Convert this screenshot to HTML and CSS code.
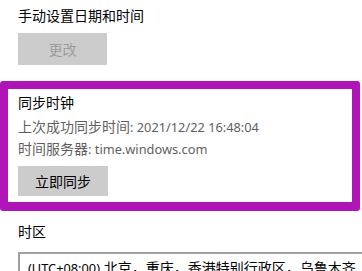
FILE: index.html
```html
<!DOCTYPE html>
<html lang="zh-CN">
<head>
<meta charset="utf-8">
<link rel="stylesheet" href="styles.css">
</head>
<body>
<div class="section">
  <div class="label">手动设置日期和时间</div>
  <button class="btn btn-disabled">更改</button>
</div>
<div class="sync-box">
  <div class="label">同步时钟</div>
  <div class="info first">上次成功同步时间<span class="latin">: 2021/12/22 16:48:04</span></div>
  <div class="info">时间服务器<span class="latin">: time.windows.com</span></div>
  <button class="btn btn-sync">立即同步</button>
</div>
<div class="section">
  <div class="label tz-label">时区</div>
  <div class="select"><span class="latin">(UTC+08:00)</span> 北京，重庆，香港特别行政区，乌鲁木齐</div>
</div>
</body>
</html>
```
FILE: styles.css
```css
html, body {
  margin: 0;
  padding: 0;
  background: #ffffff;
  overflow: hidden;
}
body {
  width: 362px;
  height: 271px;
  font-family: "Noto Sans", "Noto Sans CJK SC", sans-serif;
  font-size: 14px;
  color: #000000;
}
.section {
  padding: 0 18px;
  overflow: hidden;
}
.label {
  line-height: 20px;
  margin-top: 6px;
  white-space: nowrap;
}
.latin {
  font-size: 12.8px;
}
.btn {
  display: block;
  border: none;
  background: #cccccc;
  font-family: "Noto Sans", "Noto Sans CJK SC", sans-serif;
  font-size: 14px;
  padding: 0;
  margin: 0;
}
.btn-disabled {
  width: 89px;
  height: 32px;
  margin-top: 7px;
  color: #9c9c9c;
}
.sync-box {
  box-sizing: border-box;
  width: 360px;
  margin-top: 16px;
  border: 8px solid #ae14b6;
  border-bottom-width: 9px;
  border-radius: 3px;
  padding: 4px 10px 6px 10px;
}
.sync-box .label {
  margin-top: 0;
}
.info {
  line-height: 22px;
  color: #5f5f5f;
  white-space: nowrap;
}
.info.first {
  margin-top: 3px;
}
.btn-sync {
  width: 90px;
  height: 30px;
  margin-top: 6px;
  color: #000000;
}
.tz-label {
  margin-top: 11px;
}
.select {
  box-sizing: border-box;
  margin-top: 10px;
  width: 400px;
  height: 32px;
  border: 2px solid #a0a0a0;
  padding: 0 8px;
  line-height: 28px;
  white-space: nowrap;
  color: #000000;
}
```
